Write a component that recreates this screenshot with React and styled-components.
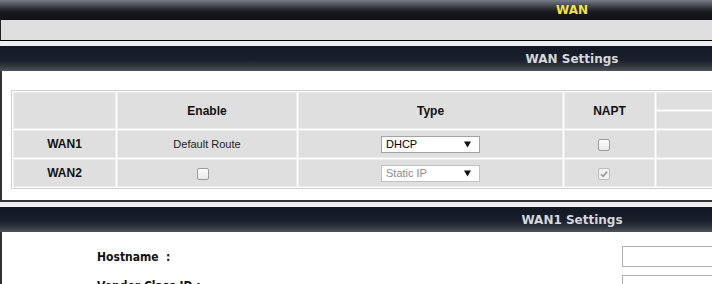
import React from "react";
import styled, { createGlobalStyle } from "styled-components";

const GlobalStyle = createGlobalStyle`
  html, body {
    margin: 0;
    padding: 0;
    overflow: hidden;
    background: #efefef;
    font-family: "Liberation Sans", Arial, sans-serif;
  }
`;

const Page = styled.div`
  width: 1144px;
  display: flex;
  flex-direction: column;
`;

const Section = styled.section`
  display: flex;
  flex-direction: column;
  margin-bottom: ${(p) => p.$gap || 0}px;
`;

const TopBar = styled.div`
  height: 20px;
  display: flex;
  align-items: center;
  justify-content: center;
  background: linear-gradient(#787d87 0%, #3a3d43 35%, #17191c 60%, #101214 100%);
  color: #f1e444;
  font-family: "DejaVu Sans", Verdana, sans-serif;
  font-weight: bold;
  font-size: 12px;
`;

const TitleBar = styled.div`
  height: 25px;
  display: flex;
  align-items: center;
  justify-content: center;
  background: linear-gradient(#121925 0%, #19202b 55%, #2e333c 78%, #50535a 100%);
  color: #d6d8db;
  font-family: "DejaVu Sans", Verdana, sans-serif;
  font-weight: bold;
  font-size: 12px;
`;

const GreyBody = styled.div`
  height: 20px;
  background: #dedede;
  border-left: 1px solid #202020;
  border-bottom: 1px solid #000;
`;

const WhiteBody = styled.div`
  background: #fff;
  border-left: 2px solid #333;
  border-bottom: ${(p) => (p.$closed ? "2px solid #333" : "none")};
  padding: ${(p) => p.$pad};
`;

const Table = styled.table`
  width: 1122px;
  margin-left: 9px;
  table-layout: fixed;
  border-collapse: separate;
  border-spacing: 1px;
  border: 1px solid #d2d2d2;
  background: #fff;
`;

const Cell = styled.td`
  box-sizing: border-box;
  height: ${(p) => p.$h || 28}px;
  padding: 0;
  background: #dfdfdf;
  border: 1px solid #ececec;
  text-align: center;
  vertical-align: middle;
  font-size: ${(p) => (p.$bold ? 12 : 11)}px;
  font-weight: ${(p) => (p.$bold ? "bold" : "normal")};
  color: ${(p) => (p.$bold ? "#111" : "#222")};
`;

const SelectWrap = styled.div`
  position: relative;
  display: inline-block;
  width: 99px;
  height: 17px;
  vertical-align: middle;
`;

const Select = styled.select`
  appearance: none;
  box-sizing: border-box;
  width: 100%;
  height: 100%;
  margin: 0;
  padding: 0 0 0 4px;
  border: 1px solid ${(p) => (p.disabled ? "#c2c2c2" : "#a3a3a3")};
  border-radius: 0;
  background: #fff;
  font-family: "Liberation Sans", Arial, sans-serif;
  font-size: 11px;
  color: ${(p) => (p.disabled ? "#8c8c8c" : "#000")};
  opacity: 1;
`;

const Arrow = styled.svg`
  position: absolute;
  right: 9px;
  top: 5px;
  pointer-events: none;
`;

const Check = styled.span`
  display: inline-block;
  box-sizing: border-box;
  width: 12px;
  height: 12px;
  margin-right: ${(p) => p.$shift || 0}px;
  border: 1px solid ${(p) => (p.$disabled ? "#bdbdbd" : "#9c9c9c")};
  border-radius: 2px;
  background: ${(p) =>
    p.$disabled ? "#f2f2f2" : "linear-gradient(#fdfdfd, #e9e9e9)"};
  vertical-align: middle;
  line-height: 0;
`;

const FormRow = styled.div`
  display: grid;
  grid-template-columns: 525px 200px;
  align-items: center;
  padding-left: 95px;
  margin-bottom: 8px;
`;

const Label = styled.label`
  font-family: "DejaVu Sans Condensed", "DejaVu Sans", sans-serif;
  font-weight: bold;
  font-size: 12px;
  color: #111;
`;

const TextInput = styled.input`
  box-sizing: border-box;
  width: 200px;
  height: 21px;
  margin: 0;
  border: 1px solid #b0b0b0;
  background: #fff;
`;

const Caret = () => (
  <Arrow width="7" height="7" viewBox="0 0 7 7">
    <polygon points="0,0.5 7,0.5 3.5,6.5" fill="#111" />
  </Arrow>
);

const TypeSelect = ({ value, disabled }) => (
  <SelectWrap>
    <Select value={value} disabled={disabled} onChange={() => {}}>
      <option>DHCP</option>
      <option>Static IP</option>
      <option>PPPoE</option>
    </Select>
    <Caret />
  </SelectWrap>
);

const CheckBox = ({ checked, disabled, shift }) => (
  <Check $disabled={disabled} $shift={shift}>
    {checked && (
      <svg width="10" height="10" viewBox="0 0 10 10">
        <path d="M2 5.2 L4.1 7.3 L8.2 2.6" stroke="#9b9b9b" strokeWidth="1.7" fill="none" />
      </svg>
    )}
  </Check>
);

const wans = [
  { name: "WAN1", enable: "Default Route", type: "DHCP", napt: false },
  { name: "WAN2", enable: null, type: "Static IP", napt: true, locked: true },
];

export default function App() {
  return (
    <Page>
      <GlobalStyle />
      <Section $gap={5}>
        <TopBar>WAN</TopBar>
        <GreyBody />
      </Section>

      <Section $gap={5}>
        <TitleBar>WAN Settings</TitleBar>
        <WhiteBody $closed $pad="19px 0 11px">
          <Table>
            <colgroup>
              <col style={{ width: 103 }} />
              <col style={{ width: 180 }} />
              <col style={{ width: 265 }} />
              <col style={{ width: 91 }} />
              <col style={{ width: 200 }} />
              <col />
            </colgroup>
            <thead>
              <tr>
                <Cell rowSpan={2} $h={18} $bold />
                <Cell rowSpan={2} $h={18} $bold>Enable</Cell>
                <Cell rowSpan={2} $h={18} $bold>Type</Cell>
                <Cell rowSpan={2} $h={18} $bold>NAPT</Cell>
                <Cell colSpan={2} $h={18} $bold />
              </tr>
              <tr>
                <Cell $h={18} $bold />
                <Cell $h={18} $bold />
              </tr>
            </thead>
            <tbody>
              {wans.map((w) => (
                <tr key={w.name}>
                  <Cell $bold>{w.name}</Cell>
                  <Cell>{w.enable || <CheckBox shift={8} />}</Cell>
                  <Cell>
                    <TypeSelect value={w.type} disabled={w.locked} />
                  </Cell>
                  <Cell>
                    <CheckBox checked={w.napt} disabled={w.locked} shift={12} />
                  </Cell>
                  <Cell />
                  <Cell />
                </tr>
              ))}
            </tbody>
          </Table>
        </WhiteBody>
      </Section>

      <Section>
        <TitleBar>WAN1 Settings</TitleBar>
        <WhiteBody $pad="14px 0 0">
          <FormRow>
            <Label>Hostname&nbsp;&nbsp;:</Label>
            <TextInput />
          </FormRow>
          <FormRow>
            <Label>Vendor Class ID&nbsp;:</Label>
            <TextInput />
          </FormRow>
        </WhiteBody>
      </Section>
    </Page>
  );
}
